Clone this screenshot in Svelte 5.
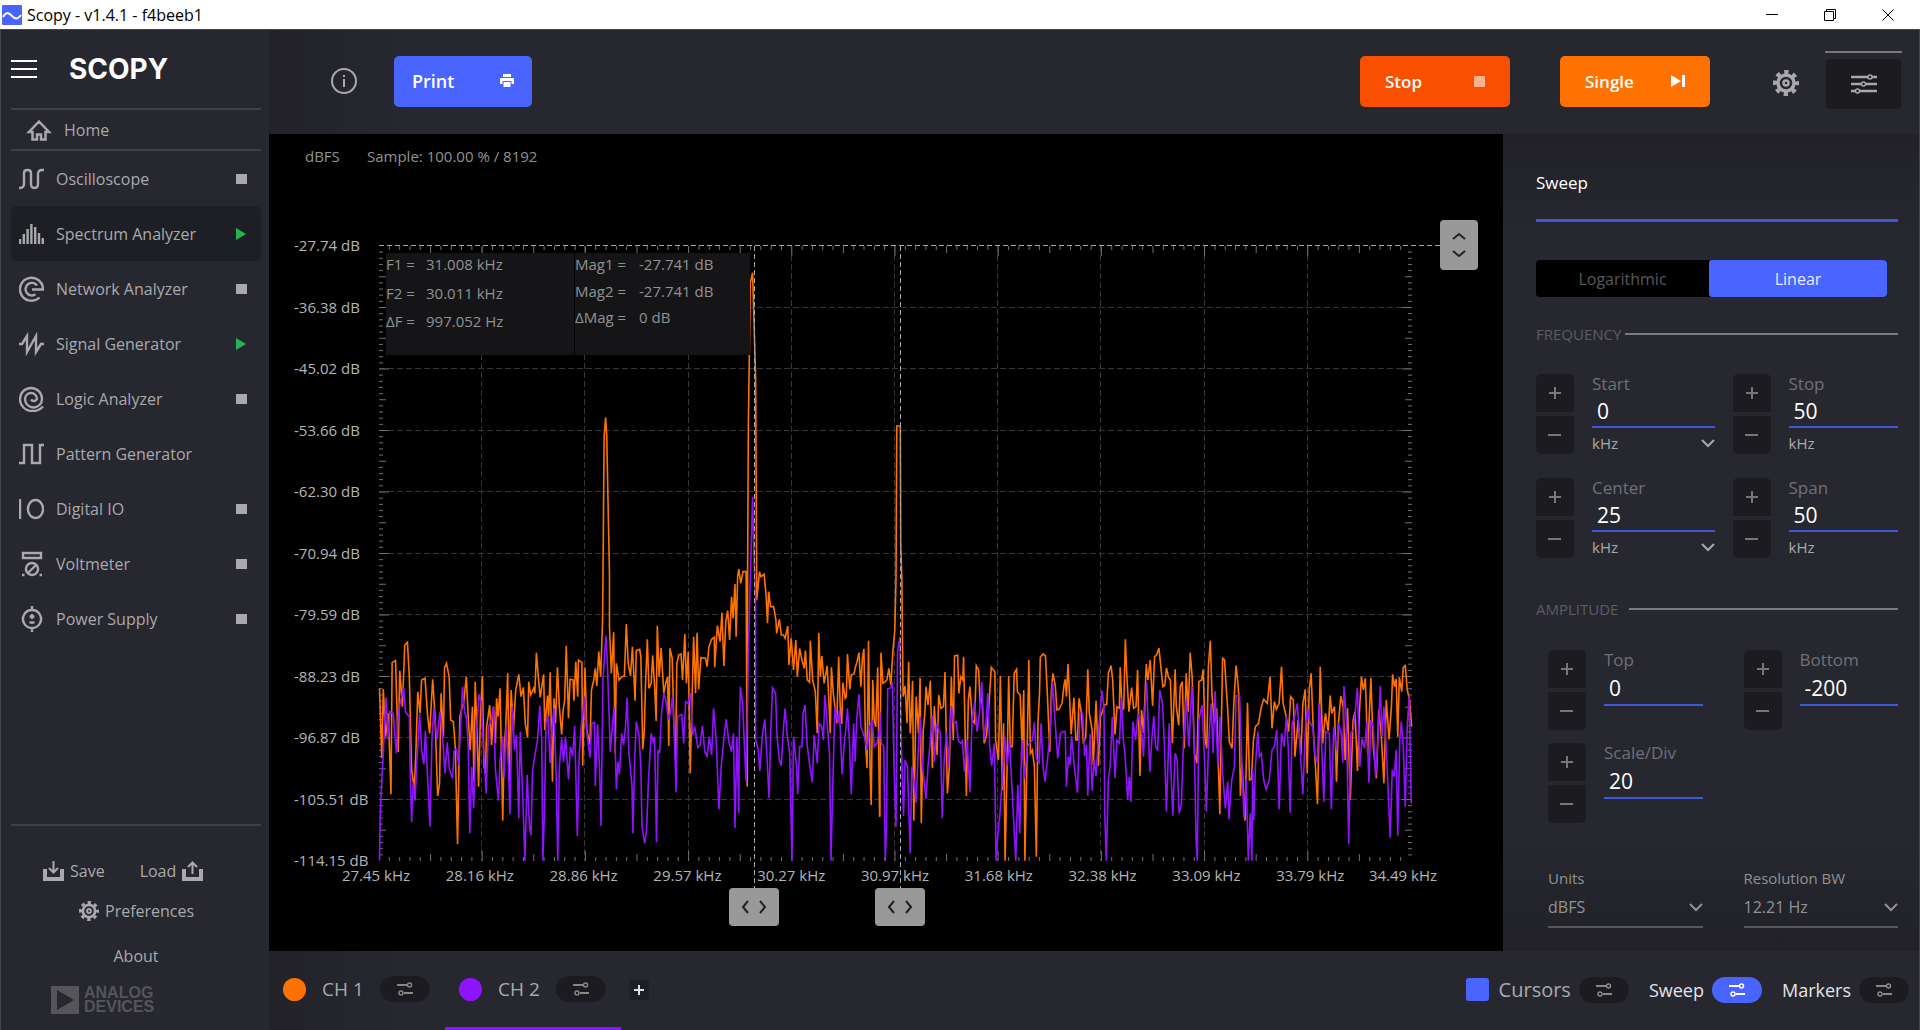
<script lang="ts">
    const tools = [
        { name: 'Oscilloscope', state: 'stopped', icon: 'M0 22h1q4 0 4-4V7q0-3 3.5-3t3.5 3v11q0 4 3.5 4t3.5-4V8q0-4 4-4h2' },
        { name: 'Spectrum Analyzer', state: 'running', icon: 'M1 23v-5M4.8 23V13M8.6 23V8M12.4 23V3M16.2 23V6M20 23V12M23.8 23v-6' },
        { name: 'Network Analyzer', state: 'stopped', icon: 'M20.5 21.5A11.5 11.5 0 1 1 24 13.5H13M18 9.5A6.3 6.3 0 1 0 16.5 18.3' },
        { name: 'Signal Generator', state: 'running', icon: 'M0 13h3l5-8v16l9-16v16l5-8h3' },
        { name: 'Logic Analyzer', state: 'stopped', icon: 'M24 20.5A13 13 0 0 1 13 25A12 12 0 0 1 1 13A11 11 0 0 1 23 13A8.5 8.5 0 0 1 6 13A6 6 0 0 1 18 13A3.5 3.5 0 0 1 12 13.5' },
        { name: 'Pattern Generator', state: '', icon: 'M0 22h5V4h8v18h8V4h4' },
        { name: 'Digital IO', state: 'stopped', icon: 'M1 3v20M16.5 4a7.5 9 0 1 0 .01 0z' },
        { name: 'Voltmeter', state: 'stopped', icon: 'M4 2h18v5H4zM13 12a6 6 0 1 0 .01 0zM9 22l8-8M3 24h2.5M20.5 24H23' },
        { name: 'Power Supply', state: 'stopped', icon: 'M13 4a9 9 0 1 0 .01 0zM13 0v4M13 22v4M10.5 10.5h5M13 8v5M10.5 16.5h5' }
    ]

    const frequency = [
        { label: 'Start', value: '0', unit: 'kHz', units: true },
        { label: 'Stop', value: '50', unit: 'kHz', units: false },
        { label: 'Center', value: '25', unit: 'kHz', units: true },
        { label: 'Span', value: '50', unit: 'kHz', units: false }
    ]

    const amplitude = [
        { label: 'Top', value: '0' },
        { label: 'Bottom', value: '-200' },
        { label: 'Scale/Div', value: '20' }
    ]

    const magLabels = ['-27.74', '-36.38', '-45.02', '-53.66', '-62.30', '-70.94', '-79.59', '-88.23', '-96.87', '-105.51', '-114.15']
    const freqLabels = ['27.45', '28.16', '28.86', '29.57', '30.27', '30.97', '31.68', '32.38', '33.09', '33.79', '34.49']

    // plot canvas, in viewBox units
    const canvas = { width: 1234, height: 817 }
    const left = 110
    const right = 1142
    const top = 112
    const bottom = 727
    const stepX = (right - left) / 10
    const stepY = (bottom - top) / 10
    const cursorX = [485, 631]

    function tickLength(i) {
        return i % 10 === 0 ? 10 : i % 5 === 0 ? 7 : 4
    }

    const ticksX = Array.from({ length: 99 }, (_, i) => ({ x: left + ((i + 1) * stepX) / 10, len: tickLength(i + 1) }))
    const ticksY = Array.from({ length: 99 }, (_, i) => ({ y: top + ((i + 1) * stepY) / 10, len: tickLength(i + 1) }))

    // each sweep comes in two blocks with their own horizontal resolution
    const lowBlock = 'translate(11 446) scale(0.38265 0.33333)'
    const highBlock = 'translate(591 446) scale(0.39541 0.33333)'

    const traces = [
        {
            color: '#ff7200',
            low: '260,325 266,535 270,328 276,470 283,400 290,643 293,248 302,242 309,516 313,272 320,380 326,195 333,187 338,290 344,568 351,628 355,520 360,335 366,400 370,300 379,295 386,410 391,460 399,298 405,405 412,648 417,610 421,340 427,470 430,262 435,250 442,290 446,420 453,425 458,500 464,793 470,410 476,380 480,370 487,290 492,415 497,510 503,380 507,605 510,305 514,420 519,620 524,400 529,288 533,560 537,580 540,440 548,375 553,495 558,380 563,490 566,355 570,410 575,325 578,490 582,722 586,500 590,440 595,280 599,602 604,330 610,450 616,330 624,283 630,350 636,322 641,430 647,472 650,305 655,345 663,325 666,340 670,218 675,290 680,352 689,283 692,450 699,347 702,410 706,277 712,605 716,355 720,430 725,262 730,380 736,463 740,390 744,360 748,197 754,415 758,298 766,300 768,362 773,245 778,350 780,240 789,248 791,557 797,262 802,450 810,493 814,330 820,300 824,265 828,318 833,215 838,290 843,120 844,0 847,-430 851,-487 854,-430 858,-190 861,-20 861,140 866,280 872,157 876,520 879,250 886,300 893,290 900,288 905,132 910,250 916,288 921,200 928,362 931,212 940,208 943,230 948,508 952,455 955,320 960,178 964,325 970,310 974,226 979,320 983,423 986,137 991,290 996,204 1003,340 1008,310 1013,290 1016,498 1019,205 1025,235 1029,420 1034,543 1037,250 1042,225 1048,222 1052,300 1058,162 1062,310 1067,215 1072,580 1077,350 1081,170 1086,340 1090,158 1094,328 1100,233 1112,235 1116,260 1121,200 1128,178 1135,172 1136,262 1143,137 1150,185 1155,98 1160,258 1165,125 1170,92 1175,180 1180,50 1184,115 1189,12 1192,170 1196,-10 1199,-33 1204,10 1210,-25 1218,-25 1221,620 1222,-23 1224,-465 1229,-890 1235,-922 1239,-765 1243,-605 1246,60 1253,-25 1257,-10 1265,-17 1270,40 1274,130 1277,35 1282,80 1290,80 1296,120 1298,160 1305,118 1310,165 1316,165 1320,175 1327,138 1330,255 1336,175 1342,270 1348,180 1352,290 1358,205 1364,240 1370,265 1373,212 1378,300 1384,307 1386,182 1392,300 1399,335 1404,460 1408,158 1412,290 1416,228 1422,310 1430,258 1434,350 1438,460 1441,262 1446,340 1450,380 1455,430 1460,230 1464,380 1468,432 1471,308 1477,355 1480,350 1483,222 1489,328 1493,285 1500,282 1504,260 1508,245 1513,218 1518,320 1522,235 1526,207 1530,480 1534,565 1538,182 1542,560 1545,675 1549,300 1553,425 1557,440 1562,262 1567,710',
            high: '50,710 53,218 58,310 64,305 68,300 73,265 78,315 83,218 88,150 91,0 93,-462 102,-462 103,-110 106,0 107,130 109,350 114,318 119,430 123,245 127,460 130,400 133,302 136,722 142,350 148,460 152,293 155,730 160,450 164,400 167,320 172,375 178,302 183,565 188,378 195,525 199,345 205,385 211,380 215,276 221,640 226,560 231,290 236,480 239,228 247,226 250,340 255,290 260,300 262,230 269,648 274,360 278,320 284,420 290,430 294,257 300,270 304,370 308,345 314,490 320,465 325,395 329,320 332,262 341,275 343,480 350,540 355,288 360,630 363,430 367,842 372,560 376,288 380,500 385,500 390,280 396,268 398,335 405,345 410,500 414,330 417,842 422,555 427,240 431,520 436,510 441,560 446,830 450,430 454,340 456,232 463,222 469,228 473,320 480,515 484,330 488,280 494,318 498,390 503,388 511,370 516,315 519,298 522,350 526,252 530,350 534,463 541,353 546,480 550,480 554,355 560,400 565,490 571,470 576,268 580,400 587,450 590,555 597,362 603,558 608,410 613,395 618,375 624,373 628,280 635,257 639,300 645,463 650,380 656,385 658,262 663,390 667,385 671,178 675,290 680,395 687,323 692,385 698,380 702,270 708,588 712,390 717,458 724,252 728,300 734,240 740,378 745,230 750,225 756,204 760,250 766,320 771,315 775,264 780,290 785,300 790,490 797,268 800,380 806,436 810,320 815,305 820,505 825,280 830,395 835,218 840,290 846,520 852,550 857,305 864,300 868,268 873,480 877,505 881,260 886,182 890,340 896,430 902,385 910,703 914,430 917,235 922,240 925,300 930,390 934,485 941,505 945,380 951,257 955,300 958,345 962,648 966,550 974,722 980,368 985,600 990,598 995,480 1000,440 1008,430 1015,380 1021,358 1030,370 1037,290 1042,445 1048,365 1053,388 1060,370 1066,260 1070,370 1078,410 1084,455 1089,350 1096,360 1100,530 1108,420 1115,525 1120,370 1126,328 1131,580 1136,330 1141,280 1146,440 1150,520 1157,673 1164,260 1170,490 1177,400 1184,453 1189,347 1193,400 1200,380 1205,605 1210,430 1216,348 1222,380 1227,540 1233,385 1240,660 1247,420 1252,395 1258,573 1263,400 1268,290 1273,330 1278,295 1284,520 1292,293 1298,500 1306,595 1312,390 1318,460 1325,610 1331,360 1338,478 1344,380 1347,283 1352,320 1356,297 1360,470 1364,292 1370,335 1374,262 1379,257 1384,330 1390,360 1395,440'
        },
        {
            color: '#9013fe',
            low: '260,842 262,700 266,600 270,520 273,440 277,353 283,475 287,395 296,400 304,520 308,420 313,375 320,340 323,323 328,395 338,410 340,560 344,727 348,605 353,662 358,540 365,402 370,510 376,553 380,452 386,600 392,740 397,480 402,385 410,480 418,395 425,470 431,580 437,488 443,570 451,595 455,512 461,508 467,555 472,440 477,320 482,395 487,410 492,500 496,760 501,560 506,685 512,480 520,343 526,370 532,510 539,640 545,440 552,420 558,380 563,570 571,662 575,540 582,470 586,592 591,440 597,560 601,703 607,380 613,510 618,465 624,715 628,455 634,640 640,842 646,585 652,740 656,765 660,570 667,520 673,480 679,377 684,480 687,842 691,700 695,430 700,408 706,550 711,440 716,385 722,600 726,842 730,560 736,475 741,545 746,470 754,598 759,500 765,528 770,437 777,768 782,520 788,432 796,350 800,440 810,533 815,430 822,427 824,618 830,433 835,560 839,738 844,300 848,230 852,167 855,235 860,400 863,515 868,450 873,380 879,628 883,545 887,583 893,460 898,495 903,440 907,353 912,520 920,620 922,760 927,540 931,425 938,465 943,560 946,740 953,790 958,750 963,600 970,460 975,485 979,470 984,787 988,510 992,520 997,400 1003,340 1008,360 1015,420 1020,400 1026,350 1030,445 1035,637 1039,410 1050,403 1055,490 1060,365 1066,370 1073,340 1078,465 1084,440 1092,503 1098,495 1104,437 1110,515 1116,528 1122,470 1128,525 1133,385 1140,480 1147,688 1153,560 1160,475 1166,418 1173,485 1180,515 1185,460 1189,745 1194,470 1199,700 1200,480 1203,320 1209,370 1213,480 1218,605 1224,220 1229,0 1235,-250 1238,-100 1243,60 1243,480 1250,510 1254,573 1260,470 1267,418 1273,540 1278,655 1283,440 1287,323 1295,340 1299,470 1305,540 1310,557 1316,440 1320,385 1326,470 1332,520 1338,842 1342,470 1350,560 1353,643 1358,500 1364,500 1367,400 1372,375 1378,500 1385,560 1391,607 1396,465 1404,550 1409,430 1416,440 1420,480 1424,345 1430,430 1436,520 1440,842 1445,600 1450,380 1458,430 1462,390 1469,583 1474,500 1478,455 1483,385 1488,480 1493,643 1499,430 1503,545 1507,420 1513,343 1518,440 1526,465 1535,510 1540,440 1548,425 1553,500 1560,490 1567,445',
            high: '50,395 54,490 60,500 64,842 67,745 70,326 76,325 82,312 86,560 91,740 95,215 101,170 104,470 110,708 114,540 120,560 127,820 131,560 136,600 142,668 147,520 152,410 158,560 167,657 172,560 178,480 183,408 188,545 194,430 203,460 208,714 213,540 219,458 224,555 231,378 237,430 243,425 249,483 255,490 259,483 264,575 271,480 278,637 283,430 290,365 296,455 302,400 308,306 314,480 320,410 323,340 328,500 333,557 340,490 344,842 349,760 354,700 360,590 366,470 372,557 378,480 385,640 394,842 399,615 404,760 409,480 416,595 423,500 430,488 436,480 441,427 446,535 453,548 458,430 463,560 468,605 474,540 480,470 487,306 492,400 500,535 507,460 514,455 519,455 522,620 527,530 531,555 535,468 542,560 550,638 556,400 563,400 568,528 573,495 576,647 582,463 587,632 592,540 597,588 604,440 612,332 617,380 619,700 623,842 628,600 633,555 638,410 645,595 650,480 656,490 661,353 666,480 670,520 677,660 681,590 685,665 690,425 697,480 703,400 712,445 717,530 721,380 725,307 733,575 738,480 743,408 748,500 753,512 758,330 765,370 770,500 775,695 782,430 787,590 791,707 797,520 802,540 807,700 813,670 818,485 825,360 832,500 839,318 845,470 850,780 853,842 857,420 865,375 872,560 876,695 882,480 888,370 893,520 898,333 905,560 911,410 917,580 924,685 930,605 933,718 940,600 947,560 951,347 960,348 964,490 971,712 977,600 982,842 987,700 991,842 993,570 996,720 1000,560 1006,455 1010,530 1015,520 1021,600 1027,628 1035,600 1042,510 1048,500 1054,450 1060,688 1066,460 1073,500 1078,410 1083,500 1088,698 1093,430 1099,410 1106,370 1112,480 1120,643 1127,430 1132,385 1138,430 1145,440 1150,520 1157,550 1161,370 1167,480 1173,665 1178,455 1187,460 1192,688 1198,440 1205,510 1210,430 1217,460 1221,548 1224,318 1230,420 1236,793 1241,460 1248,450 1253,390 1258,323 1264,560 1270,475 1276,505 1282,425 1287,608 1292,420 1298,440 1304,590 1309,500 1316,318 1320,470 1325,380 1330,480 1336,640 1341,773 1346,570 1351,590 1356,510 1360,767 1365,480 1369,425 1374,500 1379,680 1384,440 1389,347 1394,670'
        }
    ]

    let active = $state('Spectrum Analyzer')
    let scale = $state('Linear')
    let cursors = $state(true)
</script>

<svelte:head>
    <title>Scopy - v1.4.1 - f4beeb1</title>
</svelte:head>

{#snippet gear(size)}
    <svg width={size} height={size} viewBox="0 0 26 26" fill="none" stroke="currentColor" aria-hidden="true">
        <circle cx="13" cy="13" r="11" stroke-width="4" stroke-dasharray="4.3 4.34" stroke-dashoffset="2.1" />
        <circle cx="13" cy="13" r="8" stroke-width="3.5" />
        <circle cx="13" cy="13" r="2.5" stroke-width="2.5" />
    </svg>
{/snippet}

{#snippet sliders()}
    <svg width="16" height="14" viewBox="0 0 16 14" fill="none" stroke="currentColor" stroke-width="2" aria-hidden="true">
        <path d="M0 3h10M7 11h9" />
        <circle cx="12.5" cy="3" r="2" stroke-width="1.5" />
        <circle cx="4" cy="11" r="2" stroke-width="1.5" />
    </svg>
{/snippet}

{#snippet chevron()}
    <svg class="chevron" width="14" height="10" viewBox="0 0 14 10" fill="none" stroke="currentColor" stroke-width="2" aria-hidden="true">
        <path d="M1 2l6 6 6-6" />
    </svg>
{/snippet}

{#snippet spinner(field)}
    <div class="spinner">
        <div class="steps">
            <button aria-label="Increase {field.label}">
                <svg width="14" height="14" viewBox="0 0 14 14" stroke="currentColor" stroke-width="2"><path d="M1 7h12M7 1v12" /></svg>
            </button>
            <button aria-label="Decrease {field.label}">
                <svg width="14" height="14" viewBox="0 0 14 14" stroke="currentColor" stroke-width="2"><path d="M0 7h13" /></svg>
            </button>
        </div>
        <div class="field">
            <label for="field-{field.label}">{field.label}</label>
            <input id="field-{field.label}" type="text" value={field.value} />
            {#if field.units}
                <div class="select unit">
                    <select aria-label="{field.label} unit"><option>{field.unit}</option></select>
                    {@render chevron()}
                </div>
            {:else if field.unit}
                <span class="unit">{field.unit}</span>
            {/if}
        </div>
    </div>
{/snippet}

<div class="titlebar">
    <svg width="20" height="20" viewBox="0 0 20 20" aria-hidden="true">
        <rect width="20" height="20" rx="1" fill="#4963ff" />
        <path d="M1 12c3-5 5-5 9-1s6 3 9-1" fill="none" stroke="#fff" stroke-width="2" />
    </svg>
    <span>Scopy - v1.4.1 - f4beeb1</span>
    <div class="window-buttons">
        <button aria-label="Minimize"><svg width="12" height="12" viewBox="0 0 12 12"><path d="M0 5.5h12" /></svg></button>
        <button aria-label="Restore"><svg width="12" height="12" viewBox="0 0 12 12"><path d="M.5 2.5h9v9h-9zM2.5 2.5V.5h9v9H9.5" /></svg></button>
        <button aria-label="Close"><svg width="12" height="12" viewBox="0 0 12 12"><path d="M.5.5l11 11M11.5.5l-11 11" /></svg></button>
    </div>
</div>

<div class="app">
    <aside class="sidebar">
        <div class="brand">
            <button aria-label="Menu">
                <svg width="26" height="20" viewBox="0 0 26 20" stroke="#fff" stroke-width="2"><path d="M0 2h26M0 10h26M0 18h26" /></svg>
            </button>
            <span class="logo">SCOPY</span>
        </div>
        <button class="home">
            <svg width="26" height="22" viewBox="0 0 26 22" fill="none" stroke="currentColor" stroke-width="2.5" aria-hidden="true">
                <path d="M13 2.5L3 13h3.500v7.500h4.500v-5h4v5h4.500V13H23z" />
            </svg>
            Home
        </button>
        <nav>
            {#each tools as tool}
                <button class="tool" class:active={active === tool.name} onclick={() => (active = tool.name)}>
                    <svg width="25" height="26" viewBox="0 0 25 26" fill="none" stroke="currentColor" stroke-width="2.4" aria-hidden="true">
                        <path d={tool.icon} />
                    </svg>
                    <span>{tool.name}</span>
                    {#if tool.state === 'running'}
                        <i class="running"></i>
                    {:else if tool.state === 'stopped'}
                        <i class="stopped"></i>
                    {/if}
                </button>
            {/each}
        </nav>
        <div class="session">
            <div class="files">
                <button>
                    <svg width="21" height="20" viewBox="0 0 21 20" fill="none" stroke="currentColor" aria-hidden="true">
                        <path d="M2 8v10h17V8" stroke-width="4" /><path d="M10.5 0v11M6 7l4.500 4.500L15 7" stroke-width="2" />
                    </svg>
                    Save
                </button>
                <button>
                    Load
                    <svg width="21" height="20" viewBox="0 0 21 20" fill="none" stroke="currentColor" aria-hidden="true">
                        <path d="M2 8v10h17V8" stroke-width="4" /><path d="M10.5 13V2M6 6l4.500-4.500L15 6" stroke-width="2" />
                    </svg>
                </button>
            </div>
            <button class="preferences">{@render gear(20)} Preferences</button>
            <button class="about">About</button>
            <div class="adi">
                <svg width="28" height="28" viewBox="0 0 28 28" aria-hidden="true"><path fill="#555559" fill-rule="evenodd" d="M0 0h28v28H0zM6 4v20l17-10z" /></svg>
                <span>ANALOG<br />DEVICES</span>
            </div>
        </div>
    </aside>

    <main>
        <header>
            <button class="info" aria-label="Info">
                <svg width="26" height="26" viewBox="0 0 26 26" fill="none" stroke="currentColor" stroke-width="2">
                    <circle cx="13" cy="13" r="12" /><path d="M13 11v8M13 7v2" />
                </svg>
            </button>
            <button class="action print">
                Print
                <svg width="14" height="14" viewBox="0 0 14 14" fill="#fff" aria-hidden="true"><path d="M3 0h8v3H3zM1 4h12q1 0 1 1v5h-2.500V7h-9v3H0V5q0-1 1-1zM3.500 8h7v5h-7z" /></svg>
            </button>
            <button class="action stop">
                Stop
                <svg width="11" height="11" viewBox="0 0 11 11" aria-hidden="true"><path fill="#ffb28c" d="M0 0h11v11H0z" /></svg>
            </button>
            <button class="action single">
                Single
                <svg width="14" height="14" viewBox="0 0 14 14" fill="#fff" aria-hidden="true"><path d="M0 1l10 6-10 6zM11 1h3v12h-3z" /></svg>
            </button>
            <button class="settings" aria-label="Settings">{@render gear(26)}</button>
            <div class="menu-toggle">
                <button aria-label="General settings">
                    <svg width="26" height="20" viewBox="0 0 26 20" fill="none" stroke="currentColor" stroke-width="2.5">
                        <path d="M0 3h17M21 3h5M0 10h10M15 10h11M0 17h4M9 17h17" />
                        <circle cx="19" cy="3" r="2" stroke-width="1.5" /><circle cx="12.5" cy="10" r="2" stroke-width="1.5" /><circle cx="6.5" cy="17" r="2" stroke-width="1.5" />
                    </svg>
                </button>
            </div>
        </header>

        <div class="content">
            <div class="plot">
                <svg class="chart" viewBox="0 0 {canvas.width} {canvas.height}" role="img" aria-label="Spectrum">
                    <text class="info-text" x="36" y="28">dBFS</text>
                    <text class="info-text" x="98" y="28">Sample: 100.00 % / 8192</text>

                    {#each magLabels as label, i}
                        <text x="25" y={top + i * stepY + 5}>{label} dB</text>
                    {/each}
                    {#each freqLabels as label, i}
                        <text x={i === 10 ? 1134 : 107 + i * 103.8} y="747" text-anchor="middle">{label} kHz</text>
                    {/each}

                    <g class="grid">
                        {#each { length: 9 } as _, i}
                            <path d="M{left} {Math.round(top + (i + 1) * stepY) - 0.5}H{right}" />
                            <path d="M{Math.round(left + (i + 1) * stepX) - 0.5} {top}V{bottom}" />
                        {/each}
                    </g>
                    <g class="ticks">
                        {#each ticksX as tick}
                            <path d="M{tick.x} {top}v{tick.len}M{tick.x} {bottom}v{-tick.len}" />
                        {/each}
                        {#each ticksY as tick}
                            <path d="M{left} {tick.y}h{tick.len}M{right + 1} {tick.y}h{-tick.len}" />
                        {/each}
                    </g>

                    {#each traces as trace}
                        <g fill="none" stroke={trace.color}>
                            <polyline class="trace" transform={lowBlock} points={trace.low} />
                            <polyline class="trace" transform={highBlock} points={trace.high} />
                        </g>
                    {/each}

                    <g class="cursor-lines">
                        <path d="M{left} 111.5H1172" />
                        {#each cursorX as x}
                            <path d="M{x + 0.5} {top}V756" />
                        {/each}
                    </g>

                    <rect x="117" y="119" width="188" height="102" fill="#151517" />
                    <rect x="306" y="119" width="175" height="102" fill="#151517" />
                    <g class="readout">
                        <text x="117" y="136">F1 =</text><text x="157" y="136">31.008 kHz</text>
                        <text x="117" y="165">F2 =</text><text x="157" y="165">30.011 kHz</text>
                        <text x="117" y="193">ΔF =</text><text x="157" y="193">997.052 Hz</text>
                        <text x="306" y="136">Mag1 =</text><text x="370" y="136">-27.741 dB</text>
                        <text x="306" y="163">Mag2 =</text><text x="370" y="163">-27.741 dB</text>
                        <text x="306" y="189">ΔMag =</text><text x="370" y="189">0 dB</text>
                    </g>
                </svg>
                {#each cursorX as x, i}
                    <button class="handle" aria-label="Frequency cursor {i + 1}" style="left: {(x / canvas.width) * 100}%; top: {(773 / canvas.height) * 100}%">
                        <svg width="26" height="14" viewBox="0 0 26 14"><path d="M7 1L2 7l5 6M19 1l5 6-5 6" /></svg>
                    </button>
                {/each}
                <button class="handle tall" aria-label="Magnitude cursor" style="left: {(1190 / canvas.width) * 100}%; top: {(111 / canvas.height) * 100}%">
                    <svg width="14" height="26" viewBox="0 0 14 26"><path d="M1 7l6-5 6 5M1 19l6 5 6-5" /></svg>
                </button>
            </div>

            <section class="panel">
                <h2>Sweep</h2>
                <div class="toggle">
                    {#each ['Logarithmic', 'Linear'] as option}
                        <button class:on={scale === option} onclick={() => (scale = option)}>{option}</button>
                    {/each}
                </div>
                <h3>FREQUENCY</h3>
                <div class="frequency">
                    {#each frequency as field}
                        {@render spinner(field)}
                    {/each}
                </div>
                <h3 class="wide">AMPLITUDE</h3>
                <div class="amplitude">
                    {#each amplitude as field}
                        {@render spinner(field)}
                    {/each}
                </div>
                <div class="combos">
                    <div>
                        <label for="units">Units</label>
                        <div class="select combo">
                            <select id="units"><option>dBFS</option></select>
                            {@render chevron()}
                        </div>
                    </div>
                    <div>
                        <label for="resolution">Resolution BW</label>
                        <div class="select combo">
                            <select id="resolution"><option>12.21 Hz</option></select>
                            {@render chevron()}
                        </div>
                    </div>
                </div>
            </section>
        </div>

        <footer>
            <div class="channel">
                <i class="dot" style="background: {traces[0].color}"></i>
                <span>CH 1</span>
                <button class="pill" aria-label="CH 1 settings">{@render sliders()}</button>
            </div>
            <div class="channel selected">
                <i class="dot" style="background: {traces[1].color}"></i>
                <span>CH 2</span>
                <button class="pill" aria-label="CH 2 settings">{@render sliders()}</button>
            </div>
            <button class="add" aria-label="Add channel">
                <svg width="10" height="10" viewBox="0 0 10 10" stroke="#e0e0e0" stroke-width="2"><path d="M0 5h10M5 0v10" /></svg>
            </button>
            <div class="menus">
                <div class="menu">
                    <label class="cursors"><input type="checkbox" bind:checked={cursors} />Cursors</label>
                    <button class="pill" aria-label="Cursors settings">{@render sliders()}</button>
                </div>
                <div class="menu">
                    <span>Sweep</span>
                    <button class="pill on" aria-label="Sweep settings">{@render sliders()}</button>
                </div>
                <div class="menu">
                    <span>Markers</span>
                    <button class="pill" aria-label="Markers settings">{@render sliders()}</button>
                </div>
            </div>
        </footer>
    </main>
</div>

<style>
    :global(body) {
        margin: 0;
        background: #272730;
        color: #a9a9ab;
        font-family: "Open Sans", "Noto Sans", sans-serif;
        font-size: 16px;
    }
    button, input, select {
        font: inherit;
        color: inherit;
        background: none;
        border: 0;
        padding: 0;
        margin: 0;
        border-radius: 0;
    }
    button {
        display: flex;
        align-items: center;
        cursor: pointer;
    }
    svg {
        flex: none;
    }
    .titlebar {
        display: flex;
        align-items: center;
        height: 29px;
        background: #fff;
        color: #000;
        padding: 0 3px 0 2px;
        gap: 5px;
    }
    .window-buttons {
        display: flex;
        margin-left: auto;
    }
    .window-buttons button {
        width: 58px;
        height: 29px;
        justify-content: center;
    }
    .window-buttons svg {
        fill: none;
        stroke: #000;
    }
    .app {
        box-sizing: border-box;
        display: grid;
        grid-template-columns: 268px 1fr;
        min-height: calc(100vh - 29px);
        border: 1px solid #44454b;
        border-bottom: 0;
    }
    .sidebar {
        display: flex;
        flex-direction: column;
        padding: 0 8px 0 10px;
    }
    .brand {
        display: flex;
        align-items: center;
        gap: 32px;
        height: 80px;
        box-sizing: border-box;
        border-bottom: 2px solid #404047;
    }
    .logo {
        color: #fff;
        font-family: Inter, sans-serif;
        font-weight: 700;
        font-size: 28px;
        line-height: 30px;
    }
    .home {
        height: 41px;
        box-sizing: border-box;
        padding-left: 15px;
        gap: 12px;
        border-bottom: 2px solid #404047;
    }
    nav {
        display: flex;
        flex-direction: column;
    }
    .tool {
        height: 55px;
        padding: 0 14px 0 8px;
        gap: 12px;
        border-radius: 6px;
    }
    .tool.active {
        background: #1e1f24;
    }
    .stopped, .running {
        margin-left: auto;
    }
    .stopped {
        width: 11px;
        height: 10px;
        background: #a9a9ab;
    }
    .running {
        width: 1px;
        border-left: 10px solid #27b34f;
        border-top: 6px solid transparent;
        border-bottom: 6px solid transparent;
    }
    .session {
        margin-top: auto;
        border-top: 2px solid #404047;
        padding: 34px 0 16px;
        display: flex;
        flex-direction: column;
    }
    .files {
        display: flex;
        gap: 35px;
        padding-left: 32px;
    }
    .session button {
        gap: 6px;
        line-height: 22px;
    }
    .session .preferences {
        margin-top: 18px;
        padding-left: 68px;
    }
    .session .about {
        margin: 23px auto 0;
    }
    .adi {
        display: flex;
        gap: 5px;
        margin-top: 19px;
        padding-left: 40px;
        color: #555559;
        font-family: "Liberation Sans", sans-serif;
        font-weight: 700;
        font-size: 16px;
        line-height: 14px;
    }
    main {
        min-width: 0;
        display: flex;
        flex-direction: column;
    }
    header {
        display: flex;
        align-items: center;
        box-sizing: border-box;
        height: 104px;
        background: linear-gradient(to right, #222228, #272730 140px);
        padding: 0 17px 2px 0;
    }
    .info {
        margin: 0 37px 0 62px;
    }
    .action {
        justify-content: space-between;
        box-sizing: border-box;
        width: 150px;
        height: 51px;
        padding: 0 25px;
        border-radius: 5px;
        color: #fff;
        font-size: 17px;
        font-weight: 600;
    }
    .print {
        width: 138px;
        padding: 0 18px;
        background: #4a64ff;
        font-size: 18px;
    }
    .stop {
        margin-left: auto;
        background: #f85000;
    }
    .single {
        margin-left: 50px;
        background: #ff7200;
    }
    .settings {
        margin: 4px 26px 0 63px;
    }
    .menu-toggle {
        border-top: 2px solid #77777b;
        padding: 6px 1px 0;
        margin-bottom: 3px;
    }
    .menu-toggle button {
        width: 75px;
        height: 50px;
        justify-content: center;
        background: #1c1c20;
        border-radius: 4px;
    }
    .content {
        flex: 1;
        display: grid;
        grid-template-columns: 1fr 416px;
        background: #000;
    }
    .plot {
        position: relative;
        min-width: 0;
        align-self: start;
    }
    .chart {
        display: block;
        width: 100%;
        height: auto;
    }
    .chart text {
        fill: #b4b4b6;
        font-size: 15px;
    }
    .chart .info-text, .chart .readout text {
        fill: #919193;
    }
    .grid path {
        stroke: #363636;
        stroke-dasharray: 6 3;
    }
    .ticks path {
        stroke: #707070;
    }
    .cursor-lines path {
        stroke: #a8a8a8;
        stroke-dasharray: 5 3;
    }
    .trace {
        vector-effect: non-scaling-stroke;
        stroke-width: 1.6;
    }
    .handle {
        position: absolute;
        transform: translate(-50%, -50%);
        width: 50px;
        height: 38px;
        justify-content: center;
        background: #999;
        border-radius: 4px;
    }
    .handle.tall {
        width: 38px;
        height: 50px;
    }
    .handle svg {
        fill: none;
        stroke: #222;
        stroke-width: 2;
    }
    .panel {
        background: linear-gradient(#212127, #272730 100px, #272730 700px, #212127);
        padding: 34px 21px 0 33px;
    }
    h2 {
        margin: 0 0 38px;
        padding-bottom: 21px;
        border-bottom: 3px solid #4255d8;
        color: #fff;
        font-size: 17px;
        font-weight: 400;
        line-height: 30px;
    }
    .toggle {
        display: grid;
        grid-template-columns: 173fr 178fr;
        margin-right: 11px;
        background: #000;
        border-radius: 4px;
        overflow: hidden;
    }
    .toggle button {
        height: 37px;
        justify-content: center;
        color: #58585b;
    }
    .toggle .on {
        background: #4a64ff;
        color: #e8eaff;
        border-radius: 3px;
    }
    h3 {
        display: flex;
        align-items: center;
        gap: 4px;
        margin: 27px 0 30px;
        color: #5c5c62;
        font-size: 15px;
        font-weight: 400;
        line-height: 20px;
    }
    h3::after {
        content: "";
        flex: 1;
        height: 2px;
        background: #7b7b7f;
    }
    h3.wide {
        gap: 11px;
        margin: 41px 0 31px;
    }
    .frequency {
        display: grid;
        grid-template-columns: 178fr 165fr;
        gap: 24px 18px;
    }
    .amplitude, .combos {
        display: grid;
        grid-template-columns: 1fr 1fr;
        gap: 13px 41px;
        padding-left: 12px;
    }
    .spinner {
        display: flex;
        gap: 18px;
        height: 80px;
    }
    .steps {
        display: flex;
        flex-direction: column;
        gap: 4px;
    }
    .steps button {
        width: 38px;
        height: 38px;
        justify-content: center;
        background: #1c1c20;
        border-radius: 5px 5px 0 0;
        color: #77777b;
    }
    .steps button:last-child {
        border-radius: 0 0 5px 5px;
    }
    .field {
        flex: 1;
        min-width: 0;
        display: flex;
        flex-direction: column;
    }
    .field label {
        color: #707075;
        font-size: 17px;
        line-height: 20px;
    }
    .field input {
        box-sizing: border-box;
        width: 100%;
        height: 36px;
        padding: 2px 0 0 5px;
        border-bottom: 2px solid #4257dd;
        color: #fff;
        font-size: 21px;
    }
    .unit {
        margin-top: 4px;
        font-size: 15px;
        line-height: 22px;
    }
    .select {
        display: grid;
        align-items: center;
    }
    .select select {
        grid-area: 1 / 1;
        appearance: none;
        width: 100%;
    }
    .chevron {
        grid-area: 1 / 1;
        justify-self: end;
        pointer-events: none;
    }
    .combos {
        margin-top: 45px;
        color: #929295;
    }
    .combos label {
        display: block;
        font-size: 15px;
        line-height: 20px;
    }
    .combo {
        height: 38px;
        border-bottom: 2px solid #57575b;
    }
    footer {
        display: flex;
        align-items: stretch;
        height: 79px;
        background: linear-gradient(to right, #222228, #272730 140px);
        padding-right: 10px;
        font-size: 19px;
    }
    .channel {
        display: flex;
        align-items: center;
        box-sizing: border-box;
        width: 176px;
        padding: 0 15px 0 14px;
        border-bottom: 3px solid transparent;
    }
    .channel span {
        margin: 0 auto 0 16px;
    }
    .selected {
        border-bottom-color: #9013fe;
    }
    .dot {
        width: 23px;
        height: 23px;
        border-radius: 50%;
    }
    .pill {
        width: 50px;
        height: 26px;
        justify-content: center;
        background: #1c1c20;
        border-radius: 13px;
        color: #88888b;
    }
    .pill.on {
        background: #4a64ff;
        color: #fff;
    }
    .add {
        align-self: center;
        justify-content: center;
        width: 20px;
        height: 20px;
        margin: 0 0 2px 8px;
        background: #1e1f25;
        border-radius: 2px;
    }
    .menus {
        display: flex;
        align-items: center;
        gap: 20px;
        margin-left: auto;
        padding-bottom: 2px;
        font-size: 18px;
        color: #e4e4e6;
    }
    .menu {
        display: flex;
        align-items: center;
        gap: 8px;
    }
    .cursors {
        display: flex;
        align-items: center;
        gap: 10px;
        color: #a9a9ab;
        font-size: 20px;
    }
    .cursors input {
        appearance: none;
        width: 23px;
        height: 23px;
        border-radius: 3px;
        background: #1c1c20;
    }
    .cursors input:checked {
        background: #4a64ff;
    }
</style>
